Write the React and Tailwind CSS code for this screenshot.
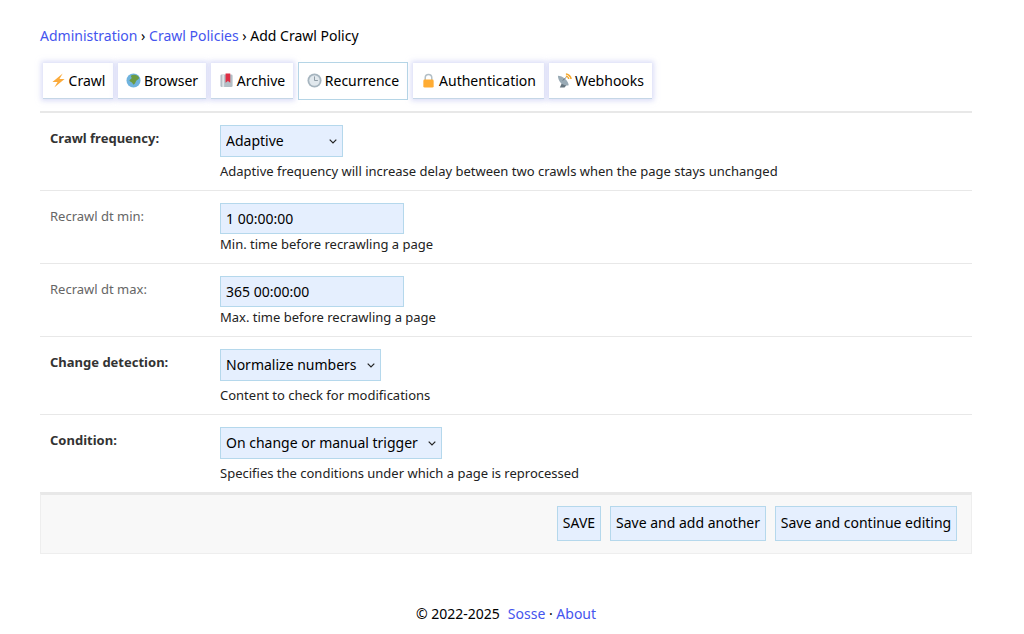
import React from 'react';

const Bolt = () => (
  <svg width="15" height="15" viewBox="0 0 16 16" className="shrink-0">
    <path d="M12.5 0.5 L1.5 9.5 L7 9.5 L3.5 15.5 L14.5 6.5 L9 6.5 L12.5 0.5 Z" fill="#fbab3c" />
  </svg>
);

const Globe = () => (
  <svg width="15" height="15" viewBox="0 0 16 16" className="shrink-0">
    <circle cx="8" cy="8" r="7.5" fill="#6fb3de" />
    <path d="M5 3 C8 1 13 2 14 5 C14 7 11 7 10.5 9 C10 11 8.5 13 7.5 12 C7 10 5 9.5 4 8.5 C3 7 6 6.5 6 5 Z" fill="#6c9b43" />
  </svg>
);

const Book = () => (
  <svg width="15" height="15" viewBox="0 0 16 16" className="shrink-0">
    <rect x="1.5" y="1.5" width="13" height="13.5" rx="1.5" fill="#b3bfc6" />
    <rect x="3.5" y="1.5" width="2" height="13.5" fill="#dfe5e8" />
    <path d="M7 0.5 H12 V10.5 L9.5 8.5 L7 10.5 Z" fill="#dd2e44" />
  </svg>
);

const Clock = () => (
  <svg width="15" height="15" viewBox="0 0 16 16" className="shrink-0">
    <circle cx="8" cy="8" r="7.5" fill="#a6b5bf" />
    <circle cx="8" cy="8" r="5.6" fill="#e1e8ed" />
    <path d="M8 3.6 V8 H11.6" fill="none" stroke="#8b98a1" strokeWidth="1" />
  </svg>
);

const Lock = () => (
  <svg width="15" height="15" viewBox="0 0 16 16" className="shrink-0">
    <path d="M4.5 8 V5 a3.5 3.5 0 0 1 7 0 V8" fill="none" stroke="#b3bfc6" strokeWidth="1.6" />
    <rect x="2.5" y="7" width="11" height="8.5" rx="1.5" fill="#ffac33" />
  </svg>
);

const Satellite = () => (
  <svg width="15" height="15" viewBox="0 0 16 16" className="shrink-0">
    <path d="M3 15.5 L6 9 L10 13 L8 15.5 Z" fill="#66757f" />
    <path d="M1 3 C6 3 12 8 12.5 13 C6 14.5 1 9 1 3 Z" fill="#99aab5" />
    <path d="M6 8 L10 4.5" stroke="#66757f" strokeWidth="1" />
    <path d="M9.5 1 C12 1 15 4 15 6.5 M9.5 3.5 C11 3.5 12.5 5 12.5 6.5" fill="none" stroke="#f4a62a" strokeWidth="1.6" />
  </svg>
);

const tabs = [
  { name: 'Crawl', icon: <Bolt />, width: 'w-[70px]' },
  { name: 'Browser', icon: <Globe />, width: 'w-[88px]' },
  { name: 'Archive', icon: <Book />, width: 'w-[82px]' },
  { name: 'Recurrence', icon: <Clock />, width: 'w-[110px]', active: true },
  { name: 'Authentication', icon: <Lock />, width: 'w-[131px]' },
  { name: 'Webhooks', icon: <Satellite />, width: 'w-[103px]' },
];

const Tab = ({ tab }) => (
  <div
    className={
      tab.active
        ? `${tab.width} h-[38px] -my-px pb-px flex items-center justify-center gap-[3px] bg-white border border-[#b5d5e6]`
        : `${tab.width} h-9 flex items-center justify-center gap-[3px] bg-white border-b border-[#c5d6e6] shadow-[0_0_5px_2px_rgba(190,195,240,0.55)]`
    }
  >
    {tab.icon}
    <span>{tab.name}</span>
  </div>
);

const fieldClass = 'bg-[#e5effe] border border-[#b5d8ec] text-[14px] text-black';

const Row = ({ label, required, help, children, height }) => (
  <div className={`${height} flex border-b border-[#e8e8e8] pl-2.5`}>
    <label
      className={`w-[170px] shrink-0 pt-[15px] text-[13px] leading-[20px] ${
        required ? 'font-bold text-[#333333]' : 'text-[#666666]'
      }`}
    >
      {label}
    </label>
    <div className="pt-3 flex flex-col items-start">
      {children}
      <p className={`text-[13px] leading-4 text-[#222222] ${required ? 'mt-[6px]' : 'mt-[2px]'}`}>{help}</p>
    </div>
  </div>
);

// native arrow comes out too heavy, so the chevron is drawn over a plain select
const Select = ({ value, width, options }) => (
  <div className={`relative ${width} h-8`}>
    <select defaultValue={value} className={`${fieldClass} appearance-none w-full h-8 pl-[5px] pb-[2px] rounded-none`}>
      {options.map((o) => (
        <option key={o}>{o}</option>
      ))}
    </select>
    <svg width="8" height="5" viewBox="0 0 8 5" className="absolute right-[6px] top-[14px] pointer-events-none">
      <path d="M0.7 0.7 L4 4 L7.3 0.7" fill="none" stroke="#222222" strokeWidth="1.2" />
    </svg>
  </div>
);

const TextField = ({ value }) => (
  <input defaultValue={value} className={`${fieldClass} w-[184px] h-[31px] px-[5px]`} />
);

const Button = ({ children, width }) => (
  <button className={`${fieldClass} ${width} h-[35px] pb-[3px] flex items-center justify-center`}>{children}</button>
);

const App = () => {
  return (
    <div className="w-[1024px] h-[634px] overflow-hidden bg-white pl-10 pr-[52px] pt-[25px] text-[14px] text-black font-['Noto_Sans',sans-serif]">
      <div className="h-[21px] leading-[21px] whitespace-nowrap">
        <a className="text-[#4455ee]">Administration</a> › <a className="text-[#4455ee]">Crawl Policies</a> › Add Crawl Policy
      </div>

      <div className="mt-[17px] flex gap-[5px] pl-[3px] pb-3 border-b-2 border-[#e8e8e8] h-[50px]">
        {tabs.map((tab) => (
          <Tab key={tab.name} tab={tab} />
        ))}
      </div>

      <Row label="Crawl frequency:" required height="h-[78px]" help="Adaptive frequency will increase delay between two crawls when the page stays unchanged">
        <Select value="Adaptive" width="w-[123px]" options={['Adaptive', 'Constant']} />
      </Row>
      <Row label="Recrawl dt min:" height="h-[73px]" help="Min. time before recrawling a page">
        <TextField value="1 00:00:00" />
      </Row>
      <Row label="Recrawl dt max:" height="h-[73px]" help="Max. time before recrawling a page">
        <TextField value="365 00:00:00" />
      </Row>
      <Row label="Change detection:" required height="h-[78px]" help="Content to check for modifications">
        <Select value="Normalize numbers" width="w-[161px]" options={['Normalize numbers', 'Raw content']} />
      </Row>
      <Row label="Condition:" required height="h-[78px]" help="Specifies the conditions under which a page is reprocessed">
        <Select value="On change or manual trigger" width="w-[222px]" options={['On change or manual trigger', 'Always']} />
      </Row>

      <div className="h-[61px] flex items-start justify-end gap-[9px] pt-[11px] pr-[14px] bg-[#f8f8f8] border border-[#eeeeee] border-t-2 border-t-[#e8e8e8]">
        <Button width="w-[44px]">SAVE</Button>
        <Button width="w-[156px]">Save and add another</Button>
        <Button width="w-[182px]">Save and continue editing</Button>
      </div>

      <div className="mt-[49px] text-center leading-[21px] whitespace-pre">
        © 2022-2025<a className="ml-[8px] text-[#4455ee]">Sosse</a> · <a className="text-[#4455ee]">About</a>
      </div>
    </div>
  );
};

export default App;
